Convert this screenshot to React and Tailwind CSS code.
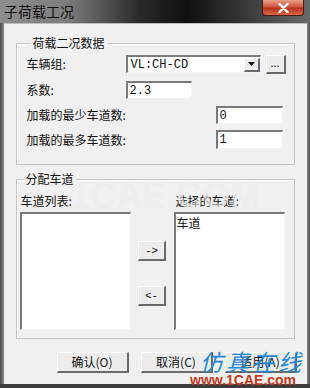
const ui = { fontFamily: '"Noto Sans CJK SC", "Noto Sans", sans-serif' };
const mono = { fontFamily: '"Liberation Mono", "Noto Sans CJK SC", monospace' };

function Sunken({ className = "", children }) {
    return (
        <div className={"bg-white border-t-2 border-l-2 border-t-[#7a7a7a] border-l-[#7a7a7a] border-b border-r border-b-[#f4f4f4] border-r-[#f4f4f4] " + className}>
            {children}
        </div>
    );
}

function Raised({ className = "", children }) {
    return (
        <div className={"flex items-center justify-center bg-[#ececec] border-t border-l border-t-white border-l-white border-b-2 border-r-2 border-b-[#6a6a6a] border-r-[#6a6a6a] " + className}>
            {children}
        </div>
    );
}

function Group({ title, className = "", children }) {
    return (
        <fieldset className={"border border-[#c4c4c4] shadow-[inset_1px_1px_0_#ffffff] " + className}>
            <legend className="ml-[4px] px-[2px] text-[12px] leading-[16px] text-[#111]">{title}</legend>
            {children}
        </fieldset>
    );
}

export default function App() {
    return (
        <div className="relative w-[310px] h-[388px] overflow-hidden bg-[#5a5a5a] text-[12px] leading-[16px] text-[#111]" style={ui}>
            {/* title bar */}
            <div className="h-[23px] flex items-start bg-[linear-gradient(90deg,#8e8e8e_0%,#7c7c7c_22%,#2a2a2a_45%,#101010_60%,#3a3a3a_80%,#6c6c6c_100%)]">
                <div className="pl-[4px] pt-[3px] text-[14px] leading-[16px] text-[#101010]">子荷载工况</div>
                <div className="ml-auto mr-[6px] w-[42px] h-[16px] rounded-b-[4px] border border-t-0 border-[#4a1a14] bg-[linear-gradient(180deg,#e9a08e_0%,#d2553c_45%,#b8301c_55%,#d86a4a_100%)] flex items-center justify-center">
                    <svg width="11" height="10" viewBox="0 0 11 10">
                        <path d="M1.5 1 L9.5 9 M9.5 1 L1.5 9" stroke="#ffffff" strokeWidth="2.4" strokeLinecap="round" />
                    </svg>
                </div>
            </div>
            <div className="flex h-[361px]">
                <div className="w-[4px] bg-[linear-gradient(90deg,#4a4a4a,#8a8a8a)]" />
                <div className="flex-1 bg-[#f0f0f0] border-t border-[#bdbdbd] flex flex-col">
                    <Group title="荷载二况数据" className="mt-[11px] ml-[12px] mr-[12px] pl-[10px] pr-[8px] pb-[15px]">
                        <div className="mt-[4px] flex items-center h-[18px]">
                            <div className="w-[99px]">车辆组:</div>
                            <Sunken className="w-[135px] h-[18px] flex items-center">
                                <span className="pl-[3px] flex-1 text-[12px]" style={mono}>VL:CH-CD</span>
                                <Raised className="w-[16px] h-[14px]">
                                    <svg width="7" height="4" viewBox="0 0 7 4"><path d="M0 0 H7 L3.5 4 Z" fill="#111" /></svg>
                                </Raised>
                            </Sunken>
                            <Raised className="ml-[5px] w-[20px] h-[19px] text-[11px] leading-none pb-[3px]">...</Raised>
                        </div>
                        <div className="mt-[8px] flex items-center h-[18px]">
                            <div className="w-[99px]">系数:</div>
                            <Sunken className="w-[66px] h-[18px] pl-[2px] flex items-center">
                                <span style={mono}>2.3</span>
                            </Sunken>
                        </div>
                        <div className="mt-[7px] flex items-center h-[18px]">
                            <div className="w-[189px]">加载的最少车道数:</div>
                            <Sunken className="w-[67px] h-[18px] pl-[2px] flex items-center">
                                <span style={mono}>0</span>
                            </Sunken>
                        </div>
                        <div className="mt-[6px] flex items-center h-[19px]">
                            <div className="w-[189px]">加载的最多车道数:</div>
                            <Sunken className="w-[67px] h-[19px] pl-[2px] flex items-center">
                                <span style={mono}>1</span>
                            </Sunken>
                        </div>
                    </Group>

                    <Group title="分配车道" className="mt-[6px] ml-[12px] mr-[12px] pl-[3px] pr-[7px] pb-[8px]">
                        <div className="mt-[6px] flex h-[16px]">
                            <div className="w-[154px] pl-[1px]">车道列表:</div>
                            <div className="pl-[2px]">选择的车道:</div>
                        </div>
                        <div className="mt-[3px] flex">
                            <Sunken className="w-[111px] h-[118px]" />
                            <div className="w-[43px] flex flex-col items-center pt-[29px]">
                                <Raised className="w-[28px] h-[20px] text-[11px]"><span style={mono}>-&gt;</span></Raised>
                                <Raised className="mt-[25px] w-[28px] h-[20px] text-[11px]"><span style={mono}>&lt;-</span></Raised>
                            </div>
                            <Sunken className="w-[111px] h-[118px] pl-[1px] pt-[1px]">
                                <div>车道</div>
                            </Sunken>
                        </div>
                    </Group>

                    <div className="mt-[13px] flex gap-[12px] pl-[53px]">
                        <Raised className="w-[72px] h-[21px]">确认(O)</Raised>
                        <Raised className="w-[72px] h-[21px]">取消(C)</Raised>
                        <Raised className="w-[72px] h-[21px]">适用(A)</Raised>
                    </div>
                </div>
                <div className="w-[4px] bg-[linear-gradient(90deg,#8a8a8a,#4a4a4a)]" />
            </div>
            <div className="h-[4px] bg-[#3c3c3c]" />

            {/* watermarks */}
            <div className="absolute left-[70px] top-[178px] text-[36px] leading-none font-bold text-[#ececec] opacity-60 pointer-events-none whitespace-nowrap" style={{ fontFamily: '"Liberation Sans", sans-serif' }}>1CAE.COM</div>
            <div className="absolute left-[200px] top-[348px] text-[23px] leading-[26px] italic text-[#1f86d8] tracking-[3px] pointer-events-none whitespace-nowrap">仿真在线</div>
            <div className="absolute left-[190px] top-[373px] text-[14px] leading-[14px] font-bold text-[#c43a1c] pointer-events-none whitespace-nowrap" style={{ fontFamily: '"Liberation Sans", sans-serif' }}>www.1CAE.com</div>
        </div>
    );
}
